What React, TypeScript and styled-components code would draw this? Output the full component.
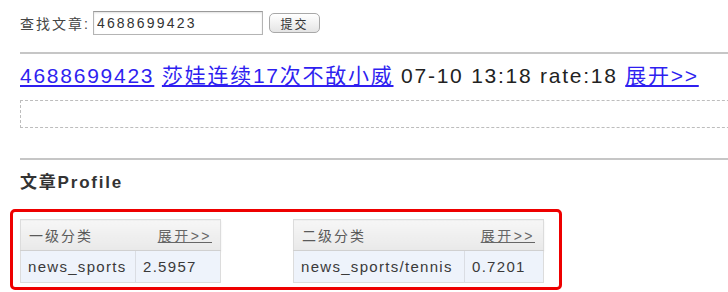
import React from 'react'
import styled, { createGlobalStyle } from 'styled-components'

//-----------------------------------------------------------------------------
// Data
//-----------------------------------------------------------------------------
const categories = [
  { title: '一级分类', name: 'news_sports', score: '2.5957', nameWidth: 115, scoreWidth: 85 },
  { title: '二级分类', name: 'news_sports/tennis', score: '0.7201', nameWidth: 171, scoreWidth: 79 }
]

//-----------------------------------------------------------------------------
// Component
//-----------------------------------------------------------------------------
const App = () => {
  return (
    <>
      <GlobalStyle />
      <Page>
        <SearchForm onSubmit={e => e.preventDefault()}>
          <SearchLabel>查找文章:</SearchLabel>
          <SearchInput defaultValue="4688699423" />
          <SubmitButton>提交</SubmitButton>
        </SearchForm>
        <Rule gap={17} />
        <ArticleLine>
          <Link href="#">4688699423</Link> <Link href="#">莎娃连续17次不敌小威</Link> 07-10 13:18 rate:18 <Link href="#">展开&gt;&gt;</Link>
        </ArticleLine>
        <DashedBox />
        <Rule gap={30} />
        <SectionTitle>文章Profile</SectionTitle>
        <Highlight>
          {categories.map(category => (
            <CategoryTable key={category.title}>
              <colgroup>
                <col style={{ width: category.nameWidth }} />
                <col style={{ width: category.scoreWidth }} />
              </colgroup>
              <thead>
                <tr>
                  <HeaderCell colSpan={2}>
                    <HeaderInner>
                      <span>{category.title}</span>
                      <HeaderLink href="#">展开&gt;&gt;</HeaderLink>
                    </HeaderInner>
                  </HeaderCell>
                </tr>
              </thead>
              <tbody>
                <tr>
                  <BodyCell>{category.name}</BodyCell>
                  <BodyCell isLast>{category.score}</BodyCell>
                </tr>
              </tbody>
            </CategoryTable>
          ))}
        </Highlight>
      </Page>
    </>
  )
}

//-----------------------------------------------------------------------------
// Styled Components
//-----------------------------------------------------------------------------
const GlobalStyle = createGlobalStyle`
  html, body {
    margin: 0;
    padding: 0;
    background: #ffffff;
    overflow: hidden;
  }
  body {
    font-family: "Liberation Sans", "Noto Sans CJK SC", sans-serif;
    color: #333333;
  }
`

const Page = styled.div`
  width: 760px;
  padding: 11px 0 0 20px;
  box-sizing: border-box;
`

const SearchForm = styled.form`
  display: flex;
  align-items: center;
  height: 24px;
`

const SearchLabel = styled.span`
  font-size: 14px;
  letter-spacing: 2px;
  color: #444444;
  margin-right: 3px;
`

const SearchInput = styled.input`
  width: 170px;
  height: 24px;
  box-sizing: border-box;
  padding: 0 3px;
  border: 1px solid #b4b4b4;
  border-top-color: #9a9a9a;
  font-family: "Liberation Sans", sans-serif;
  font-size: 14px;
  letter-spacing: 2.2px;
  color: #333333;
  outline: none;
  box-shadow: inset 0 1px 2px rgba(0, 0, 0, 0.12);
`

const SubmitButton = styled.button`
  margin-left: 6px;
  width: 51px;
  height: 20px;
  padding: 0;
  border: 1px solid #a8a8a8;
  border-radius: 5px;
  background: linear-gradient(#ffffff, #e4e4e4);
  font-family: "Liberation Sans", "Noto Sans CJK SC", sans-serif;
  font-size: 12px;
  letter-spacing: 2px;
  color: #333333;
`

const Rule = styled.div<{ gap: number }>`
  margin-top: ${({ gap }) => gap}px;
  height: 2px;
  background-color: #c6c6c6;
`

const ArticleLine = styled.div`
  margin-top: 9px;
  height: 26px;
  line-height: 26px;
  font-size: 21px;
  letter-spacing: 1.75px;
  color: #222222;
  white-space: nowrap;
`

const Link = styled.a`
  color: #2f1ff0;
  text-decoration: underline;
`

const DashedBox = styled.div`
  margin-top: 11px;
  height: 28px;
  box-sizing: border-box;
  border: 1px dashed #bdbdbd;
`

const SectionTitle = styled.div`
  margin-top: 12px;
  height: 22px;
  line-height: 22px;
  font-size: 17px;
  font-weight: bold;
  letter-spacing: 1.8px;
  color: #333333;
`

const Highlight = styled.div`
  margin: 15px 0 0 -10px;
  width: 552px;
  box-sizing: border-box;
  display: flex;
  gap: 72px;
  padding: 7px 0 4px 7px;
  border: 3px solid #ee0000;
  border-radius: 5px;
`

const CategoryTable = styled.table`
  border-collapse: collapse;
  table-layout: fixed;
  border: 1px solid #dcdcdc;
`

const HeaderCell = styled.th`
  height: 30px;
  padding: 0 8px;
  background: linear-gradient(#f6f6f6, #e9e9e9);
  border-bottom: 1px solid #d0d0d0;
  box-shadow: 0 1px 2px rgba(0, 0, 0, 0.08);
  font-weight: normal;
  text-align: left;
`

const HeaderInner = styled.div`
  display: flex;
  justify-content: space-between;
  align-items: center;
  font-size: 14px;
  letter-spacing: 2px;
  color: #5a5a5a;
`

const HeaderLink = styled.a`
  color: #666666;
  text-decoration: underline;
  letter-spacing: 2.5px;
`

const BodyCell = styled.td<{ isLast?: boolean }>`
  height: 31px;
  padding: 0 7px;
  background-color: #eef3fb;
  border-right: ${({ isLast }) => isLast ? 'none' : '1px solid #dadde3'};
  font-size: 15px;
  letter-spacing: 1.3px;
  color: #3a3a3a;
  white-space: nowrap;
`

export default App
